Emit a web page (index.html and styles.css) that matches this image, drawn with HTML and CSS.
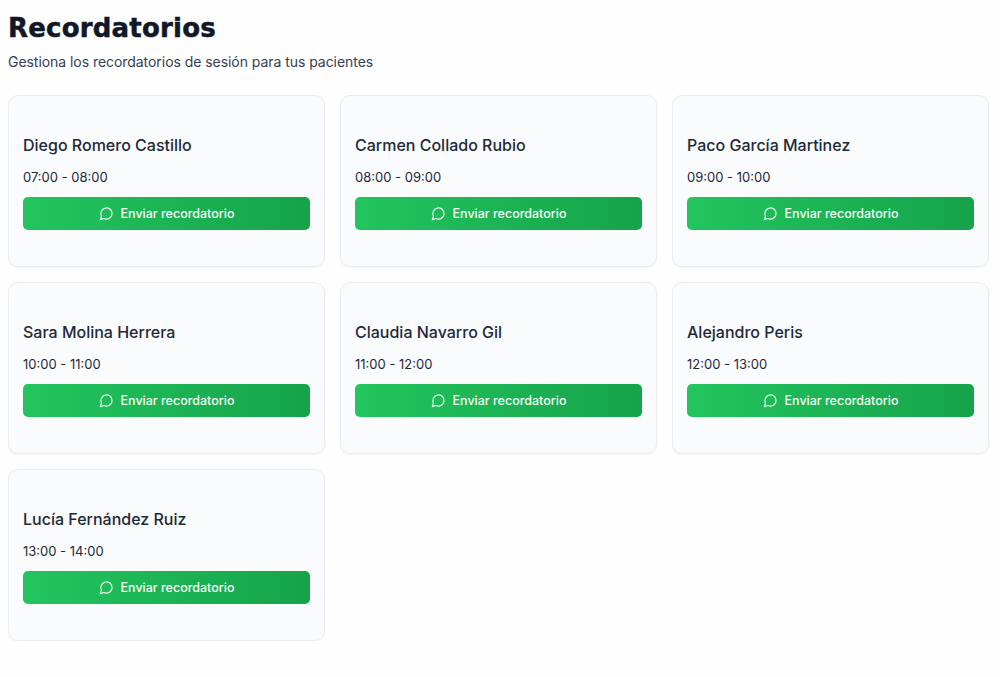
FILE: index.html
```html
<!DOCTYPE html>
<html lang="es">
<head>
    <meta charset="UTF-8">
    <title>Recordatorios</title>
    <link rel="stylesheet" href="styles.css">
</head>
<body>
    <h1>Recordatorios</h1>
    <p class="subtitle">Gestiona los recordatorios de sesión para tus pacientes</p>

    <div class="grid">
        <div class="card">
            <h2>Diego Romero Castillo</h2>
            <p class="time">07:00 - 08:00</p>
            <button class="send"><svg viewBox="0 0 24 24"><path d="M7.9 20A9 9 0 1 0 4 16.1L2 22Z"/></svg>Enviar recordatorio</button>
        </div>
        <div class="card">
            <h2>Carmen Collado Rubio</h2>
            <p class="time">08:00 - 09:00</p>
            <button class="send"><svg viewBox="0 0 24 24"><path d="M7.9 20A9 9 0 1 0 4 16.1L2 22Z"/></svg>Enviar recordatorio</button>
        </div>
        <div class="card">
            <h2>Paco García Martinez</h2>
            <p class="time">09:00 - 10:00</p>
            <button class="send"><svg viewBox="0 0 24 24"><path d="M7.9 20A9 9 0 1 0 4 16.1L2 22Z"/></svg>Enviar recordatorio</button>
        </div>
        <div class="card">
            <h2>Sara Molina Herrera</h2>
            <p class="time">10:00 - 11:00</p>
            <button class="send"><svg viewBox="0 0 24 24"><path d="M7.9 20A9 9 0 1 0 4 16.1L2 22Z"/></svg>Enviar recordatorio</button>
        </div>
        <div class="card">
            <h2>Claudia Navarro Gil</h2>
            <p class="time">11:00 - 12:00</p>
            <button class="send"><svg viewBox="0 0 24 24"><path d="M7.9 20A9 9 0 1 0 4 16.1L2 22Z"/></svg>Enviar recordatorio</button>
        </div>
        <div class="card">
            <h2>Alejandro Peris</h2>
            <p class="time">12:00 - 13:00</p>
            <button class="send"><svg viewBox="0 0 24 24"><path d="M7.9 20A9 9 0 1 0 4 16.1L2 22Z"/></svg>Enviar recordatorio</button>
        </div>
        <div class="card">
            <h2>Lucía Fernández Ruiz</h2>
            <p class="time">13:00 - 14:00</p>
            <button class="send"><svg viewBox="0 0 24 24"><path d="M7.9 20A9 9 0 1 0 4 16.1L2 22Z"/></svg>Enviar recordatorio</button>
        </div>
    </div>
</body>
</html>
```

FILE: styles.css
```css
body {
    font-family: Inter, "Liberation Sans", sans-serif;
    background-color: #fefefe;
    color: #1f2937;
    margin: 0;
    padding: 12px 11px 0 8px;
}

h1 {
    font-family: "DejaVu Sans", sans-serif;
    font-size: 26px;
    line-height: 32px;
    font-weight: 700;
    letter-spacing: 0.2px;
    color: #111827;
    -webkit-text-stroke: 0.5px #111827;
    margin: 0 0 8px;
}

.subtitle {
    font-size: 14px;
    line-height: 20px;
    letter-spacing: -0.05px;
    color: #374151;
    margin: 0 0 23px;
}

.grid {
    display: grid;
    grid-template-columns: repeat(3, 1fr);
    gap: 15px;
}

.card {
    height: 172px;
    box-sizing: border-box;
    padding: 37px 14px 0;
    display: flex;
    flex-direction: column;
    background-color: #f9fbfd;
    border: 1px solid #e9edf2;
    border-radius: 10px;
    box-shadow: 0 1px 2px rgba(0, 0, 0, 0.04);
}

.card h2 {
    font-size: 16px;
    line-height: 24px;
    font-weight: 500;
    color: #1f2937;
    margin: 0 0 10px;
}

.time {
    font-size: 13px;
    line-height: 20px;
    color: #1f2937;
    margin: 0 0 10px;
}

.send {
    height: 33px;
    display: flex;
    justify-content: center;
    align-items: center;
    gap: 7px;
    border: none;
    border-radius: 5px;
    background: linear-gradient(90deg, #22c55e, #16a34a);
    color: #f4fff8;
    font-family: inherit;
    font-size: 12.5px;
    font-weight: 500;
}

.send svg {
    width: 15px;
    height: 15px;
    fill: none;
    stroke: currentColor;
    stroke-width: 1.8;
    stroke-linecap: round;
    stroke-linejoin: round;
}
```
